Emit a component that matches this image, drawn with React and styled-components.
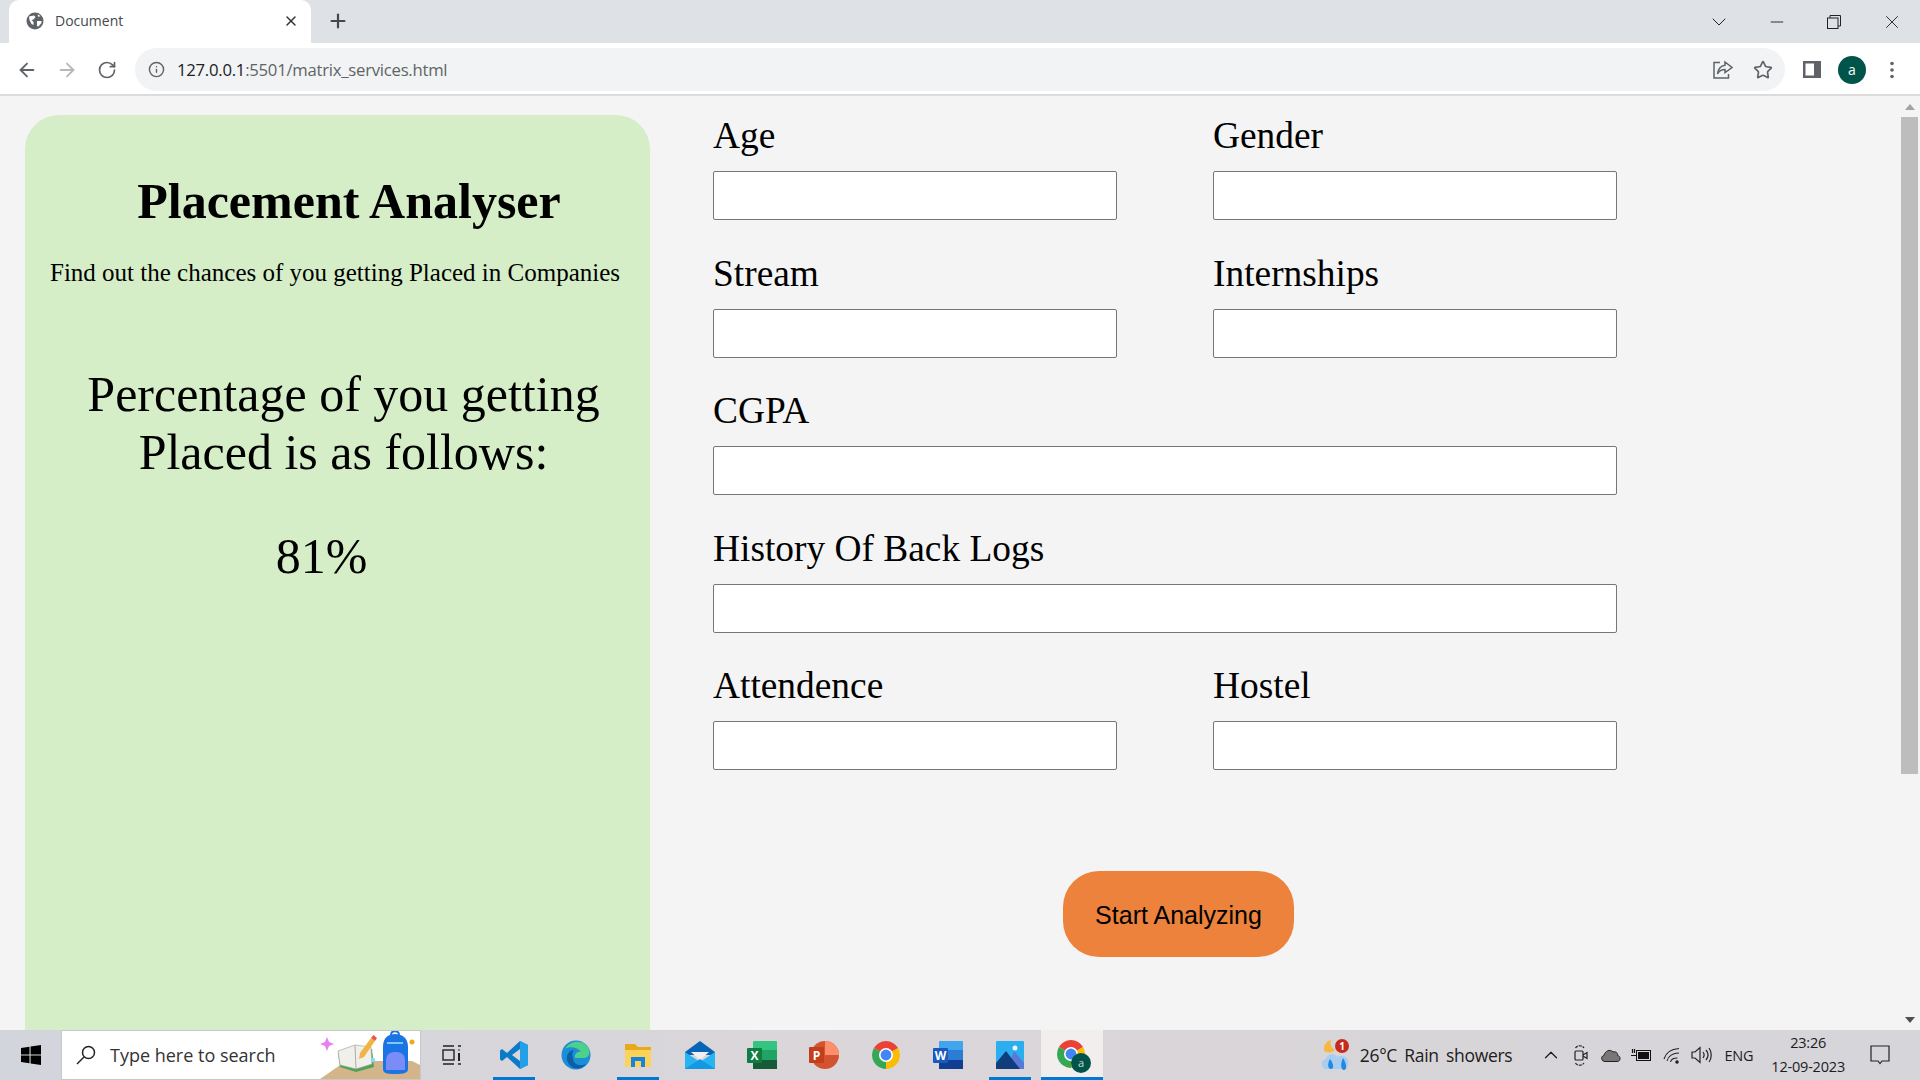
import React from 'react';
import styled, { createGlobalStyle } from 'styled-components';
import {
    ArrowLeft, ArrowRight, RotateCw, Info, Star, X, Plus, Minus, ChevronDown, ChevronUp,
} from 'lucide-react';

const GlobalStyle = createGlobalStyle`
html, body {
    margin: 0;
    padding: 0;
    height: 100%;
    overflow: hidden;
}
* {
    box-sizing: border-box;
}
`;

const uiFont = '"Open Sans", "Noto Sans", sans-serif';

const Screen = styled.div`
width: 1920px;
height: 1080px;
display: flex;
flex-direction: column;
overflow: hidden;
background: #f4f4f4;
`;

const TabStrip = styled.div`
height: 43px;
flex: none;
display: flex;
align-items: flex-end;
padding-left: 9px;
background: #dee1e6;
`;

const Tab = styled.div`
width: 302px;
height: 43px;
display: flex;
align-items: center;
padding: 0 12px 2px 17px;
background: #fff;
border-radius: 10px 10px 0 0;
font: 14px ${uiFont};
color: #45474a;
`;

const TabTitle = styled.span`
margin-left: 11px;
flex: 1;
`;

const NewTab = styled.div`
width: 22px;
margin: 0 0 9px 16px;
height: 24px;
color: #45474a;
`;

const WindowControls = styled.div`
margin-left: auto;
height: 43px;
display: flex;
align-items: center;
color: #222;
`;

const WindowButton = styled.div`
width: ${(p) => p.$w}px;
display: flex;
justify-content: center;
`;

const Toolbar = styled.div`
height: 53px;
flex: none;
display: flex;
align-items: center;
background: #fff;
border-bottom: 2px solid #dcdcdc;
padding: 2px 0 0 16px;
color: #5f6368;
`;

const NavButton = styled.div`
width: 40px;
display: flex;
padding-left: ${(p) => (p.$reload ? '1px' : '0')};
color: ${(p) => (p.$off ? '#b6b8bb' : '#5f6368')};
`;

const AddressBar = styled.div`
margin-left: -1px;
width: 1650px;
height: 43px;
border-radius: 22px;
background: #f1f3f4;
display: flex;
align-items: center;
padding: 0 2px 0 13px;
font: 16.7px ${uiFont};
letter-spacing: -0.25px;
color: #5f6368;
`;

const Url = styled.div`
margin-left: 12px;
flex: 1;
`;

const UrlHost = styled.span`
color: #202124;
`;

const BarIcon = styled.div`
width: 40px;
display: flex;
justify-content: center;
`;

const ToolRight = styled.div`
display: flex;
align-items: center;
margin-left: 7px;
`;

const Avatar = styled.div`
width: 28px;
height: 28px;
border-radius: 50%;
background: #00544a;
color: #fff;
display: flex;
align-items: center;
justify-content: center;
font: 14px ${uiFont};
`;

const Viewport = styled.div`
flex: 1;
min-height: 0;
display: flex;
overflow: hidden;
`;

const Panel = styled.section`
flex: none;
width: 625px;
height: 1100px;
margin: 19px 0 0 25px;
border-radius: 34px;
background: #d5eec7;
font-family: "Liberation Serif", serif;
color: #000;
`;

const Title = styled.h1`
margin: 58px 0 0;
padding-left: 23px;
text-align: center;
font-size: 50px;
line-height: 56px;
font-weight: bold;
`;

const Subtitle = styled.p`
margin: 30px 0 0;
padding-left: 25px;
font-size: 25px;
line-height: 28px;
`;

const ResultHeading = styled.h2`
margin: 78px 0 0;
padding-left: 12px;
text-align: center;
font-size: 50px;
line-height: 58px;
font-weight: normal;
`;

const ResultValue = styled.div`
margin-top: 47px;
padding-right: 32px;
text-align: center;
font-size: 50px;
line-height: 56px;
`;

const Form = styled.form`
flex: none;
width: 904px;
margin: 0 0 0 63px;
padding-top: 12px;
display: grid;
grid-template-columns: 404px 404px;
column-gap: 96px;
row-gap: 25.5px;
align-content: start;
font-family: "Liberation Serif", serif;
`;

const Field = styled.label`
display: block;
grid-column: ${(p) => (p.$wide ? '1 / -1' : 'auto')};
`;

const FieldName = styled.div`
height: 63px;
padding-top: 7px;
font-size: 37.4px;
line-height: 42px;
color: #000;
`;

const Input = styled.input`
display: block;
width: 100%;
height: 49px;
border: 1px solid #767676;
border-radius: 2px;
background: #fff;
`;

const Submit = styled.button`
grid-column: 1 / -1;
justify-self: start;
width: 231px;
height: 86px;
margin: 75px 0 0 350px;
padding: 3px 0 0;
border: none;
border-radius: 36px;
background: #ec823c;
color: #000;
font: 25px "Liberation Sans", sans-serif;
`;

const Scrollbar = styled.div`
margin-left: auto;
margin-right: 2px;
width: 17px;
flex: none;
display: flex;
flex-direction: column;
align-items: center;
`;

const ScrollArrow = styled.div`
height: 21px;
flex: none;
display: flex;
align-items: center;
`;

const ScrollThumb = styled.div`
width: 17px;
height: 657px;
background: #bdbdbd;
`;

const ScrollTrack = styled.div`
flex: 1;
`;

const Taskbar = styled.footer`
height: 50px;
flex: none;
display: flex;
align-items: stretch;
background: linear-gradient(90deg, #d3d5dc 0%, #dad6da 40%, #d9d5d8 60%, #d6d5da 100%);
font-family: ${uiFont};
color: #1c1c1c;
`;

const StartButton = styled.div`
width: 61px;
display: flex;
align-items: center;
justify-content: center;
`;

const SearchBox = styled.div`
width: 360px;
display: flex;
align-items: center;
padding-left: 14px;
background: #fff;
border: 1px solid #c8c8c8;
font-size: 18px;
color: #333;
position: relative;
overflow: hidden;
`;

const SearchText = styled.span`
margin-left: 14px;
`;

const SearchArt = styled.div`
position: absolute;
right: 0;
bottom: 0;
height: 50px;
`;

const TaskButton = styled.div`
width: 62px;
display: flex;
align-items: center;
justify-content: center;
position: relative;
background: ${(p) => (p.$active ? '#f3eeee' : 'transparent')};
`;

const RunningMark = styled.div`
position: absolute;
left: ${(p) => (p.$active ? 0 : '10px')};
right: ${(p) => (p.$active ? 0 : '10px')};
bottom: 0;
height: 3px;
background: #0078d4;
`;

const Tray = styled.div`
margin-left: auto;
display: flex;
align-items: center;
`;

const Weather = styled.div`
display: flex;
align-items: center;
margin-right: 24px;
font-size: 17.5px;
letter-spacing: -0.3px;
`;

const WeatherText = styled.span`
margin-left: 9px;
word-spacing: 3px;
`;

const TraySlot = styled.div`
width: 30px;
display: flex;
justify-content: center;
`;

const Lang = styled.div`
font-size: 14.5px;
margin: 0 18px 0 8px;
letter-spacing: -0.2px;
`;

const Clock = styled.div`
text-align: center;
font-size: 14.5px;
line-height: 24px;
letter-spacing: -0.2px;
`;

const Notify = styled.div`
width: 42px;
margin-left: 14px;
margin-right: 19px;
display: flex;
justify-content: center;
`;

const GlobeIcon = () => (
    <svg width="18" height="18" viewBox="0 0 18 18">
        <circle cx="9" cy="9" r="8.5" fill="#5f6368" />
        <path d="M3 4.5 L8 3.5 L9.5 5 L7.5 7.5 L5.5 8 L7.5 10 L7.5 13 L5.5 12 L3.5 8 Z" fill="#fff" />
        <path d="M11 9 L15.5 9 L15.5 11 L12.5 14.5 L11 14 Z M11.5 2.2 L14.5 4 L12.5 5 Z" fill="#fff" />
    </svg>
);

const RestoreIcon = () => (
    <svg width="14" height="14" viewBox="0 0 14 14" fill="none" stroke="#222" strokeWidth="1">
        <rect x="0.5" y="3" width="10.5" height="10.5" />
        <path d="M3 3 V0.5 H13.5 V11 H11" />
    </svg>
);

const ShareIcon = () => (
    <svg width="20" height="20" viewBox="0 0 20 20" fill="none" stroke="#5f6368" strokeWidth="1.5">
        <path d="M7 2.5 H1 V18 H15.5 V14" />
        <path d="M12 2 L19 7.5 L12 12.5 V9.5 C8 9.5 6 11 4.5 14 C5 9 8 5.8 12 5.2 Z" fill="#f1f3f4" />
    </svg>
);

const SideIcon = () => (
    <svg width="18" height="17" viewBox="0 0 18 17">
        <rect width="18" height="17" fill="#5f6368" />
        <rect x="2.5" y="2.5" width="8.5" height="12" fill="#fff" />
    </svg>
);

const DotsIcon = () => (
    <svg width="4" height="18" viewBox="0 0 4 18" fill="#5f6368">
        <circle cx="2" cy="2.5" r="1.8" />
        <circle cx="2" cy="9" r="1.8" />
        <circle cx="2" cy="15.5" r="1.8" />
    </svg>
);

const WindowsIcon = () => (
    <svg width="20" height="20" viewBox="0 0 20 20" fill="#000">
        <path d="M0 3 L8.5 1.8 V9.4 H0 Z M9.6 1.6 L20 0 V9.4 H9.6 Z M0 10.6 H8.5 V18.2 L0 17 Z M9.6 10.6 H20 V20 L9.6 18.4 Z" />
    </svg>
);

const SearchGlass = () => (
    <svg width="20" height="20" viewBox="0 0 20 20" fill="none" stroke="#222" strokeWidth="1.5">
        <circle cx="12.5" cy="7.5" r="6" />
        <path d="M8 12 L1 19" />
    </svg>
);

const SearchArtwork = () => (
    <svg width="100" height="50" viewBox="0 0 100 50">
        <path d="M7 8 L9 13 L14 15 L9 17 L7 22 L5 17 L0 15 L5 13 Z" fill="#e87ff0" />
        <path d="M0 50 L26 32 H92 L100 36 V50 Z" fill="#d4b48a" />
        <path d="M18 24 L35 18 L52 20 L54 38 L36 43 L20 38 Z" fill="#4fa356" />
        <path d="M18 22 L35 16 L51 18 L52 35 L36 40 L20 36 Z" fill="#f0efe9" stroke="#9a9a9a" strokeWidth="0.6" />
        <path d="M35 16 L36 40" stroke="#9a9a9a" strokeWidth="0.8" />
        <path d="M40 24 L51 9 L55 12 L44 28 L39 30 Z" fill="#f2b345" />
        <path d="M51 9 L53.5 6 L57 9 L55 12 Z" fill="#e8574a" />
        <circle cx="53" cy="31" r="2.2" fill="#7fe0ee" />
        <path d="M63 40 V18 C63 8 69 5 75 5 C81 5 88 8 88 18 V40 C88 44 84 45 75 45 C66 45 63 44 63 40 Z" fill="#1b74e4" />
        <path d="M66 41 V32 C66 25 70 23 75.5 23 C81 23 85 25 85 32 V41 Z" fill="#7a8cf5" />
        <path d="M67 14 H83" stroke="#7fc4fa" strokeWidth="2" />
        <path d="M71 6 C71 1 79 1 79 6" stroke="#1b74e4" strokeWidth="2" fill="none" />
        <circle cx="92" cy="13" r="2.5" fill="#f5a623" />
    </svg>
);

const TaskViewIcon = () => (
    <svg width="20" height="20" viewBox="0 0 20 20" fill="none" stroke="#222" strokeWidth="1.4">
        <path d="M1 1 H12 M1 19 H12 M16 1 H19 M16 19 H19" />
        <rect x="1" y="5" width="11" height="10" />
        <path d="M16.5 5 H17.5 M17 8 V16" strokeWidth="2" />
    </svg>
);

const VsCodeIcon = () => (
    <svg width="30" height="30" viewBox="0 0 30 30">
        <path d="M21 1 L29 5 V25 L21 29 L8 17 L3 21 L1 19.5 V10.5 L3 9 L8 13 Z M21 9 L13 15 L21 21 Z" fill="#0a7cc7" />
        <path d="M21 1 L29 5 V25 L21 29 Z" fill="#23a0e8" />
    </svg>
);

const EdgeIcon = () => (
    <svg width="30" height="30" viewBox="0 0 30 30">
        <circle cx="15" cy="15" r="14.5" fill="#1b8ed6" />
        <path d="M4 9 C8 1 20 -1 26 6 C30 11 29 17 24 18 H14 C13 14 17 11 20 12 C17 7 8 6 4 9 Z" fill="#4fd08a" />
        <path d="M12 18 C12 24 18 27 25 24 C21 30 9 31 6 20 C5 14 9 10 13 10 C11 12 11 15 12 18 Z" fill="#0d5ea8" />
    </svg>
);

const FilesIcon = () => (
    <svg width="28" height="26" viewBox="0 0 28 26">
        <path d="M1 2 H11 L14 5 H27 V10 H1 Z" fill="#e8a91c" />
        <rect x="1" y="8" width="26" height="17" fill="#fcd35a" />
        <path d="M7 25 V15 H21 V25 H17 V19 H11 V25 Z" fill="#1784d9" />
    </svg>
);

const MailIcon = () => (
    <svg width="30" height="28" viewBox="0 0 30 28">
        <path d="M0 11 L15 0 L30 11 V14 H0 Z" fill="#0864b5" />
        <path d="M6 11 H24 L15 19 Z" fill="#f0f0f0" />
        <path d="M0 11 L15 21 L30 11 V28 H0 Z" fill="#29b3f0" />
        <path d="M0 28 L15 18 L30 28 Z" fill="#1298e4" />
    </svg>
);

const OfficeSheet = ({ colors, letter, badge }) => (
    <svg width="30" height="28" viewBox="0 0 30 28">
        <rect x="6" y="0" width="24" height="28" rx="1" fill={colors[0]} />
        <rect x="6" y="9" width="24" height="10" fill={colors[1]} />
        <rect x="6" y="19" width="24" height="9" fill={colors[2]} />
        <rect x="0" y="7" width="15" height="15" rx="1" fill={badge} />
        <text x="7.5" y="19" fill="#fff" fontSize="12" fontWeight="bold" fontFamily="Open Sans, sans-serif" textAnchor="middle">{letter}</text>
    </svg>
);

const PowerPointIcon = () => (
    <svg width="30" height="30" viewBox="0 0 30 30">
        <circle cx="16" cy="15" r="14" fill="#d35230" />
        <path d="M16 1 A14 14 0 0 1 30 15 H16 Z" fill="#ff8f6b" />
        <rect x="0" y="7" width="15" height="16" rx="1" fill="#c43e1c" />
        <text x="7.5" y="19.5" fill="#fff" fontSize="12" fontWeight="bold" fontFamily="Open Sans, sans-serif" textAnchor="middle">P</text>
    </svg>
);

const ChromeIcon = ({ size = 30 }) => (
    <svg width={size} height={size} viewBox="0 0 30 30">
        <path d="M15 15 L2.9 8 A14 14 0 0 1 27.1 8 Z" fill="#ea4335" />
        <path d="M15 15 L27.1 8 A14 14 0 0 1 15 29 Z" fill="#fbbc04" />
        <path d="M15 15 L15 29 A14 14 0 0 1 2.9 8 Z" fill="#34a853" />
        <circle cx="15" cy="15" r="7" fill="#fff" />
        <circle cx="15" cy="15" r="5.4" fill="#4285f4" />
    </svg>
);

const PhotosIcon = () => (
    <svg width="28" height="28" viewBox="0 0 28 28">
        <rect width="28" height="28" rx="1" fill="#2aaef0" />
        <circle cx="19" cy="7" r="2.5" fill="#e8f6ff" />
        <path d="M18 10 L28 22 V28 H12 Z" fill="#5b78d6" />
        <path d="M0 22 L10 10 L24 28 H0 Z" fill="#123d7c" />
    </svg>
);

const ChromeWrap = styled.div`
position: relative;
width: 32px;
height: 32px;
`;

const ChromeBadge = styled.div`
position: absolute;
right: -3px;
bottom: -2px;
width: 20px;
height: 20px;
border-radius: 50%;
background: #00544a;
color: #cfd8d6;
font: 11px/20px ${uiFont};
text-align: center;
`;

const ChromeProfileIcon = () => (
    <ChromeWrap>
        <ChromeIcon />
        <ChromeBadge>a</ChromeBadge>
    </ChromeWrap>
);

const WeatherIcon = () => (
    <svg width="30" height="32" viewBox="0 0 30 32">
        <path d="M10 1 A9 9 0 0 0 3 12 A9 9 0 0 0 14 11 A8 8 0 0 1 10 1 Z" fill="#f5b942" />
        <path d="M5 30 C0 30 -1 21 5 20 C6 14 14 14 16 18 C22 14 29 20 27 25 C27 28 26 30 24 30 Z" fill="#a9cdf0" />
        <path d="M9 20 C6 25 7 30 10 30 C13 30 13 25 9 20 Z M22 19 C19 25 20 31 23 31 C26 31 26 25 22 19 Z" fill="#1f8ae6" />
        <circle cx="21" cy="7" r="7" fill="#c8291f" />
        <text x="21" y="11" fill="#fff" fontSize="10" fontWeight="bold" fontFamily="Open Sans, sans-serif" textAnchor="middle">1</text>
    </svg>
);

const MeetIcon = () => (
    <svg width="14" height="24" viewBox="0 0 14 24" fill="none" stroke="#222" strokeWidth="1.2">
        <rect x="1" y="8" width="8" height="9" rx="1" />
        <path d="M9 12 L13 9.5 V15.5 L9 13" />
        <path d="M1.5 5 C3 2 8 2 10 5 M1.5 20 C3 23 8 23 10 20" strokeDasharray="3 1" />
    </svg>
);

const CloudIcon = () => (
    <svg width="20" height="14" viewBox="0 0 20 14">
        <path d="M4 13.5 C0 13.5 -0.5 8 3 7.5 C4 3 9 0.5 12 4 C16 3 17 6 16.5 7.5 C20 8 20 13.5 16 13.5 Z" fill="#777" stroke="#222" strokeWidth="1" />
    </svg>
);

const BatteryIcon = () => (
    <svg width="20" height="14" viewBox="0 0 20 14">
        <rect x="5.5" y="2.5" width="14" height="10" fill="none" stroke="#111" strokeWidth="1" />
        <rect x="7" y="4" width="11" height="7" fill="#111" />
        <path d="M0 7.5 H5 M1.5 1 V5 M3.5 1 V5" stroke="#111" strokeWidth="1.2" fill="none" />
    </svg>
);

const WifiIcon = () => (
    <svg width="17" height="17" viewBox="0 0 17 17" fill="none" stroke="#222" strokeWidth="1.1">
        <path d="M1 12 C3 5 9 2 16 1.5 M4 14 C5 9 10 6 16 6 M7.5 15 C8 12.5 11 11 14.5 11" />
        <circle cx="14" cy="15" r="1.2" fill="#222" />
    </svg>
);

const SpeakerIcon = () => (
    <svg width="21" height="18" viewBox="0 0 21 18" fill="none" stroke="#222" strokeWidth="1.2">
        <path d="M1 6 H4 L9 1.5 V16.5 L4 12 H1 Z" />
        <path d="M12 6 C13.5 8 13.5 10 12 12 M15 4 C17.5 7 17.5 11 15 14 M18 2 C21 6 21 12 18 16" />
    </svg>
);

const NotifyIcon = () => (
    <svg width="20" height="20" viewBox="0 0 20 20" fill="none" stroke="#222" strokeWidth="1.2">
        <path d="M1 1 H19 V16 H12 L10 18.5 L8 16 H1 Z" />
    </svg>
);

const ScrollUp = () => (
    <svg width="10" height="6" viewBox="0 0 10 6"><path d="M5 0 L10 6 H0 Z" fill="#a3a3a3" /></svg>
);

const ScrollDown = () => (
    <svg width="10" height="6" viewBox="0 0 10 6"><path d="M0 0 H10 L5 6 Z" fill="#505050" /></svg>
);

const tasks = [
    { id: 'view', icon: <TaskViewIcon /> },
    { id: 'code', icon: <VsCodeIcon />, running: true },
    { id: 'edge', icon: <EdgeIcon /> },
    { id: 'files', icon: <FilesIcon />, running: true },
    { id: 'mail', icon: <MailIcon /> },
    { id: 'excel', icon: <OfficeSheet letter="X" badge="#107c41" colors={['#33c481', '#21a366', '#185c37']} /> },
    { id: 'ppt', icon: <PowerPointIcon /> },
    { id: 'chrome', icon: <ChromeIcon /> },
    { id: 'word', icon: <OfficeSheet letter="W" badge="#185abd" colors={['#41a5ee', '#2b7cd3', '#103f91']} /> },
    { id: 'photos', icon: <PhotosIcon />, running: true },
    { id: 'profile', icon: <ChromeProfileIcon />, running: true, active: true },
];

const App = () => (
    <Screen>
        <GlobalStyle />
        <TabStrip>
            <Tab>
                <GlobeIcon />
                <TabTitle>Document</TabTitle>
                <X size={16} strokeWidth={2.2} color="#333" />
            </Tab>
            <NewTab><Plus size={22} strokeWidth={2.4} /></NewTab>
            <WindowControls>
                <WindowButton $w={58}><ChevronDown size={24} strokeWidth={1} /></WindowButton>
                <WindowButton $w={57}><Minus size={20} strokeWidth={1.1} /></WindowButton>
                <WindowButton $w={58}><RestoreIcon /></WindowButton>
                <WindowButton $w={57}><X size={22} strokeWidth={1} /></WindowButton>
            </WindowControls>
        </TabStrip>
        <Toolbar>
            <NavButton><ArrowLeft size={22} strokeWidth={2} /></NavButton>
            <NavButton $off><ArrowRight size={22} strokeWidth={2} /></NavButton>
            <NavButton $reload><RotateCw size={20} strokeWidth={2} /></NavButton>
            <AddressBar>
                <Info size={17} strokeWidth={2} />
                <Url><UrlHost>127.0.0.1</UrlHost>:5501/matrix_services.html</Url>
                <BarIcon><ShareIcon /></BarIcon>
                <BarIcon><Star size={20} strokeWidth={2} /></BarIcon>
            </AddressBar>
            <ToolRight>
                <BarIcon><SideIcon /></BarIcon>
                <BarIcon><Avatar>a</Avatar></BarIcon>
                <BarIcon><DotsIcon /></BarIcon>
            </ToolRight>
        </Toolbar>
        <Viewport>
            <Panel>
                <Title>Placement Analyser</Title>
                <Subtitle>Find out the chances of you getting Placed in Companies</Subtitle>
                <ResultHeading>Percentage of you getting<br />Placed is as follows:</ResultHeading>
                <ResultValue>81%</ResultValue>
            </Panel>
            <Form>
                <Field><FieldName>Age</FieldName><Input /></Field>
                <Field><FieldName>Gender</FieldName><Input /></Field>
                <Field><FieldName>Stream</FieldName><Input /></Field>
                <Field><FieldName>Internships</FieldName><Input /></Field>
                <Field $wide><FieldName>CGPA</FieldName><Input /></Field>
                <Field $wide><FieldName>History Of Back Logs</FieldName><Input /></Field>
                <Field><FieldName>Attendence</FieldName><Input /></Field>
                <Field><FieldName>Hostel</FieldName><Input /></Field>
                <Submit type="button">Start Analyzing</Submit>
            </Form>
            <Scrollbar>
                <ScrollArrow><ScrollUp /></ScrollArrow>
                <ScrollThumb />
                <ScrollTrack />
                <ScrollArrow><ScrollDown /></ScrollArrow>
            </Scrollbar>
        </Viewport>
        <Taskbar>
            <StartButton><WindowsIcon /></StartButton>
            <SearchBox>
                <SearchGlass />
                <SearchText>Type here to search</SearchText>
                <SearchArt><SearchArtwork /></SearchArt>
            </SearchBox>
            {tasks.map((task) => (
                <TaskButton key={task.id} $active={task.active}>
                    {task.icon}
                    {task.running && <RunningMark $active={task.active} />}
                </TaskButton>
            ))}
            <Tray>
                <Weather>
                    <WeatherIcon />
                    <WeatherText>26°C Rain showers</WeatherText>
                </Weather>
                <TraySlot><ChevronUp size={22} strokeWidth={1.3} /></TraySlot>
                <TraySlot><MeetIcon /></TraySlot>
                <TraySlot><CloudIcon /></TraySlot>
                <TraySlot><BatteryIcon /></TraySlot>
                <TraySlot><WifiIcon /></TraySlot>
                <TraySlot><SpeakerIcon /></TraySlot>
                <Lang>ENG</Lang>
                <Clock>23:26<br />12-09-2023</Clock>
                <Notify><NotifyIcon /></Notify>
            </Tray>
        </Taskbar>
    </Screen>
);

export default App;
